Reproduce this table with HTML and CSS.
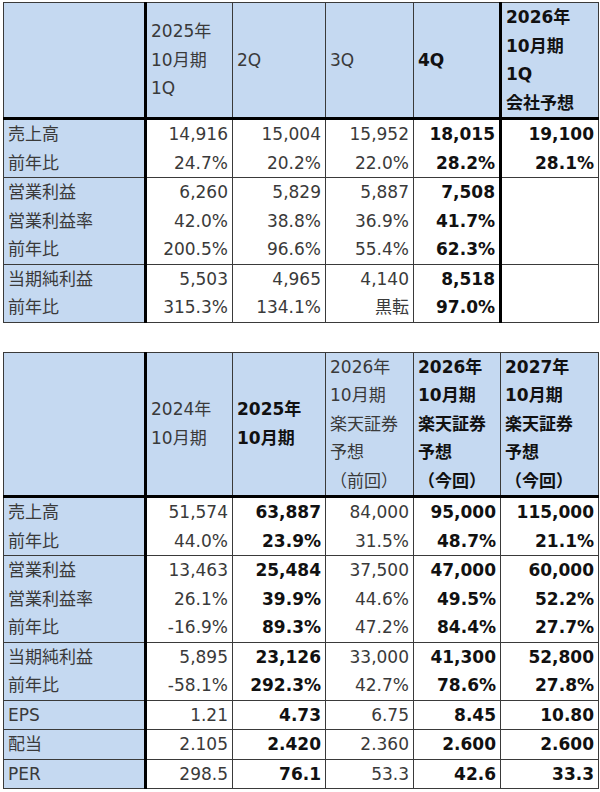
FILE: index.html
```html
<!DOCTYPE html>
<html lang="ja">
<head>
<meta charset="utf-8">
<link rel="stylesheet" href="styles.css">
</head>
<body>
<table class="fin t1">
  <colgroup>
    <col class="c-label"><col class="c1"><col class="c2"><col class="c3"><col class="c4"><col class="c5">
  </colgroup>
  <thead>
    <tr>
      <th class="lab"></th>
      <th>2025年<br>10月期<br>1Q</th>
      <th>2Q</th>
      <th>3Q</th>
      <th class="b thick-r">4Q</th>
      <th class="b">2026年<br>10月期<br>1Q<br>会社予想</th>
    </tr>
  </thead>
  <tbody>
    <tr><td class="lab">売上高</td><td>14,916</td><td>15,004</td><td>15,952</td><td class="b thick-r">18,015</td><td class="b">19,100</td></tr>
    <tr><td class="lab">前年比</td><td>24.7%</td><td>20.2%</td><td>22.0%</td><td class="b thick-r">28.2%</td><td class="b">28.1%</td></tr>
  </tbody>
  <tbody>
    <tr><td class="lab">営業利益</td><td>6,260</td><td>5,829</td><td>5,887</td><td class="b thick-r">7,508</td><td></td></tr>
    <tr><td class="lab">営業利益率</td><td>42.0%</td><td>38.8%</td><td>36.9%</td><td class="b thick-r">41.7%</td><td></td></tr>
    <tr><td class="lab">前年比</td><td>200.5%</td><td>96.6%</td><td>55.4%</td><td class="b thick-r">62.3%</td><td></td></tr>
  </tbody>
  <tbody>
    <tr><td class="lab">当期純利益</td><td>5,503</td><td>4,965</td><td>4,140</td><td class="b thick-r">8,518</td><td></td></tr>
    <tr><td class="lab">前年比</td><td>315.3%</td><td>134.1%</td><td>黒転</td><td class="b thick-r">97.0%</td><td></td></tr>
  </tbody>
</table>

<table class="fin t2">
  <colgroup>
    <col class="c-label"><col class="c1"><col class="c2"><col class="c3"><col class="c4"><col class="c5">
  </colgroup>
  <thead>
    <tr>
      <th class="lab"></th>
      <th>2024年<br>10月期</th>
      <th class="b">2025年<br>10月期</th>
      <th>2026年<br>10月期<br>楽天証券<br>予想<br>（前回）</th>
      <th class="b">2026年<br>10月期<br>楽天証券<br>予想<br>（今回）</th>
      <th class="b">2027年<br>10月期<br>楽天証券<br>予想<br>（今回）</th>
    </tr>
  </thead>
  <tbody>
    <tr><td class="lab">売上高</td><td>51,574</td><td class="b">63,887</td><td>84,000</td><td class="b">95,000</td><td class="b">115,000</td></tr>
    <tr><td class="lab">前年比</td><td>44.0%</td><td class="b">23.9%</td><td>31.5%</td><td class="b">48.7%</td><td class="b">21.1%</td></tr>
  </tbody>
  <tbody>
    <tr><td class="lab">営業利益</td><td>13,463</td><td class="b">25,484</td><td>37,500</td><td class="b">47,000</td><td class="b">60,000</td></tr>
    <tr><td class="lab">営業利益率</td><td>26.1%</td><td class="b">39.9%</td><td>44.6%</td><td class="b">49.5%</td><td class="b">52.2%</td></tr>
    <tr><td class="lab">前年比</td><td>-16.9%</td><td class="b">89.3%</td><td>47.2%</td><td class="b">84.4%</td><td class="b">27.7%</td></tr>
  </tbody>
  <tbody>
    <tr><td class="lab">当期純利益</td><td>5,895</td><td class="b">23,126</td><td>33,000</td><td class="b">41,300</td><td class="b">52,800</td></tr>
    <tr><td class="lab">前年比</td><td>-58.1%</td><td class="b">292.3%</td><td>42.7%</td><td class="b">78.6%</td><td class="b">27.8%</td></tr>
  </tbody>
  <tbody>
    <tr><td class="lab">EPS</td><td>1.21</td><td class="b">4.73</td><td>6.75</td><td class="b">8.45</td><td class="b">10.80</td></tr>
  </tbody>
  <tbody>
    <tr><td class="lab">配当</td><td>2.105</td><td class="b">2.420</td><td>2.360</td><td class="b">2.600</td><td class="b">2.600</td></tr>
  </tbody>
  <tbody>
    <tr><td class="lab">PER</td><td>298.5</td><td class="b">76.1</td><td>53.3</td><td class="b">42.6</td><td class="b">33.3</td></tr>
  </tbody>
</table>
</body>
</html>
```

FILE: styles.css
```css
html, body {
  margin: 0;
  background: #ffffff;
}

body {
  padding: 2px 3px;
}

.fin {
  border-collapse: collapse;
  table-layout: fixed;
  width: 595px;
  font-family: "DejaVu Sans", "Noto Sans CJK JP", sans-serif;
  font-size: 17px;
  color: #3a3a3a;
  border: 1px solid #3a3a3a;
}

.t2 {
  margin-top: 29px;
}

.c-label { width: 142px; }
.c1 { width: 87px; }
.c2 { width: 93px; }
.c3 { width: 88px; }
.c4 { width: 87px; }
.c5 { width: 98px; }

.fin th,
.fin td {
  border-left: 1px solid #3a3a3a;
  border-right: 1px solid #3a3a3a;
  line-height: 28.5px;
  padding: 0 4px 0 4px;
  white-space: nowrap;
  overflow: hidden;
}

.fin th {
  background: #c5d9f1;
  font-weight: normal;
  text-align: left;
  vertical-align: middle;
  padding-left: 4px;
  border-bottom: 3px solid #000000;
}

.fin td {
  text-align: right;
  padding-right: 4px;
}

.fin tbody {
  border-top: 1px solid #3a3a3a;
}

.fin .lab {
  background: #c5d9f1;
  text-align: left;
  border-right: 3px solid #000000;
}

.fin .b {
  font-weight: bold;
  color: #111111;
}

.fin .thick-r {
  border-right: 3px solid #000000;
}
```
